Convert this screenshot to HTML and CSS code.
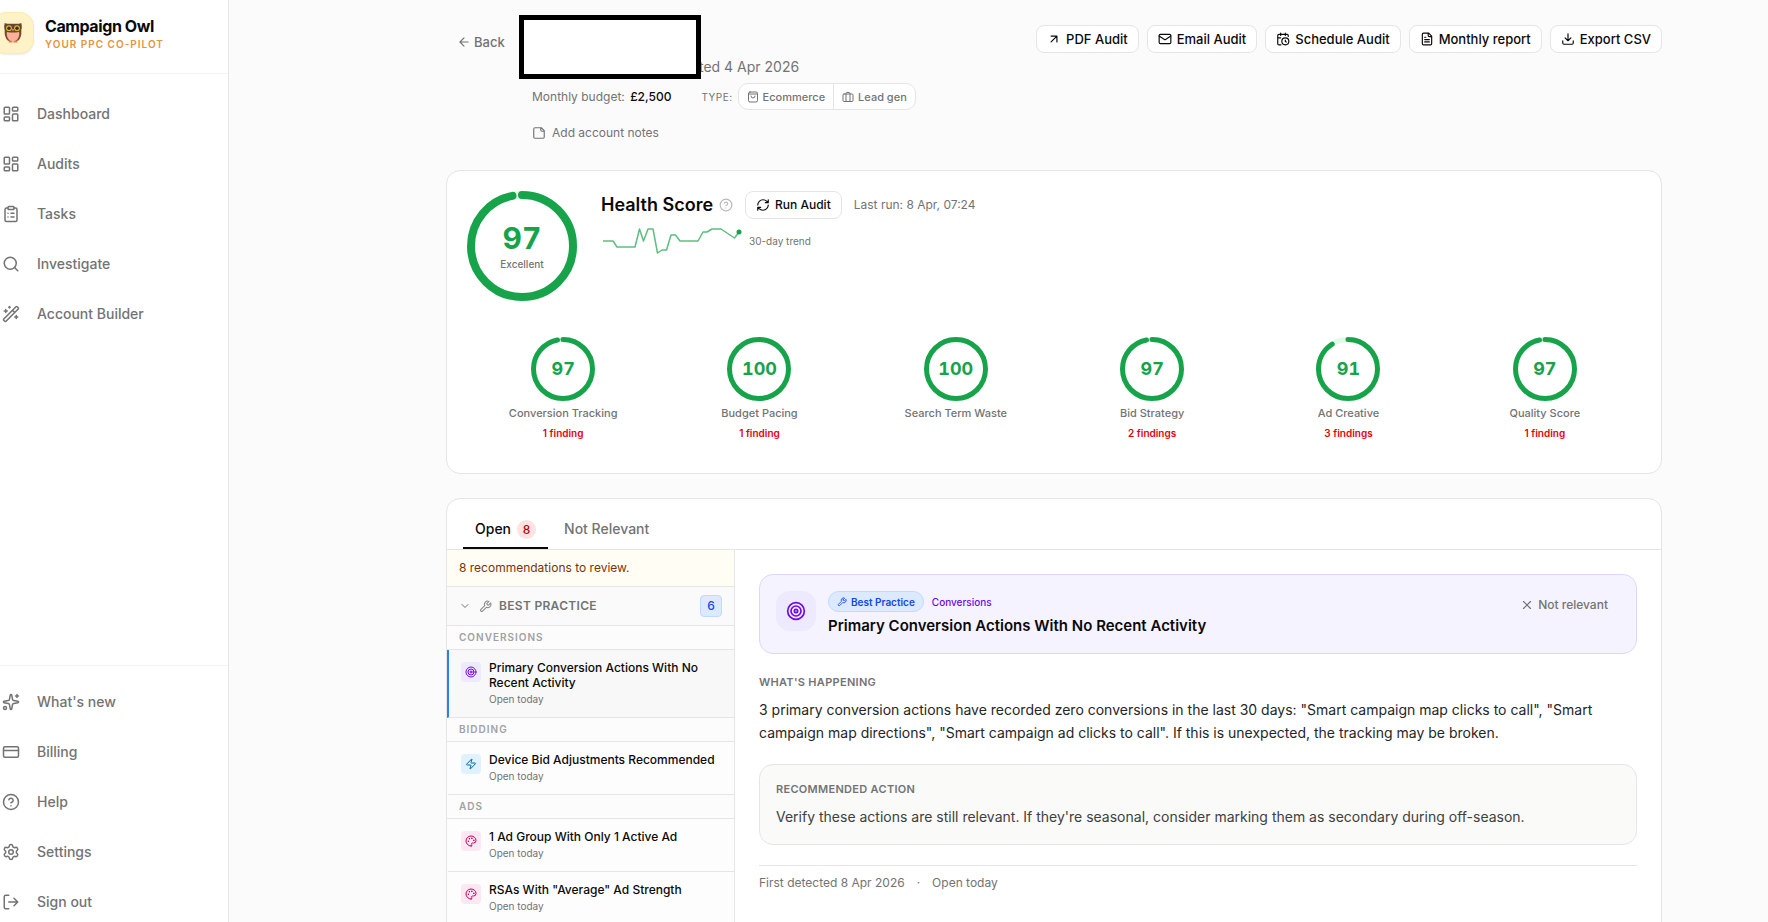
FILE: index.html
```html
<!DOCTYPE html>
<html lang="en">
<head>
<meta charset="utf-8">
<meta name="viewport" content="width=device-width, initial-scale=1">
<title>Campaign Owl</title>
<link rel="stylesheet" href="styles.css">
</head>
<body>
<svg class="sprite" aria-hidden="true">
  <symbol id="i-dashboard" viewBox="0 0 24 24"><rect width="7" height="9" x="3" y="3" rx="1"/><rect width="7" height="5" x="14" y="3" rx="1"/><rect width="7" height="9" x="14" y="12" rx="1"/><rect width="7" height="5" x="3" y="16" rx="1"/></symbol>
  <symbol id="i-tasks" viewBox="0 0 24 24"><rect width="8" height="4" x="8" y="2" rx="1"/><path d="M16 4h2a2 2 0 0 1 2 2v14a2 2 0 0 1-2 2H6a2 2 0 0 1-2-2V6a2 2 0 0 1 2-2h2M12 11h4M12 16h4M8 11h.01M8 16h.01"/></symbol>
  <symbol id="i-search" viewBox="0 0 24 24"><circle cx="11" cy="11" r="8"/><path d="m21 21-4.3-4.3"/></symbol>
  <symbol id="i-wand" viewBox="0 0 24 24"><path d="m21.64 3.64-1.28-1.28a1.21 1.21 0 0 0-1.72 0L2.36 18.64a1.21 1.21 0 0 0 0 1.72l1.28 1.28a1.2 1.2 0 0 0 1.72 0L21.64 5.36a1.2 1.2 0 0 0 0-1.72M14 7l3 3M5 6v4M19 14v4M10 2v2M7 8H3M21 16h-4M11 3H9"/></symbol>
  <symbol id="i-sparkles" viewBox="0 0 24 24"><path d="M11.017 2.814a1 1 0 0 1 1.966 0l1.051 5.558a2 2 0 0 0 1.594 1.594l5.558 1.051a1 1 0 0 1 0 1.966l-5.558 1.051a2 2 0 0 0-1.594 1.594l-1.051 5.558a1 1 0 0 1-1.966 0l-1.051-5.558a2 2 0 0 0-1.594-1.594l-5.558-1.051a1 1 0 0 1 0-1.966l5.558-1.051a2 2 0 0 0 1.594-1.594zM20 2v4M22 4h-4"/><circle cx="4" cy="20" r="2"/></symbol>
  <symbol id="i-card" viewBox="0 0 24 24"><rect width="20" height="14" x="2" y="5" rx="2"/><path d="M2 10h20"/></symbol>
  <symbol id="i-help" viewBox="0 0 24 24"><circle cx="12" cy="12" r="10"/><path d="M9.09 9a3 3 0 0 1 5.83 1c0 2-3 3-3 3M12 17h.01"/></symbol>
  <symbol id="i-settings" viewBox="0 0 24 24"><path d="M9.671 4.136a2.34 2.34 0 0 1 4.659 0 2.34 2.34 0 0 0 3.319 1.915 2.34 2.34 0 0 1 2.33 4.033 2.34 2.34 0 0 0 0 3.831 2.34 2.34 0 0 1-2.33 4.033 2.34 2.34 0 0 0-3.319 1.915 2.34 2.34 0 0 1-4.659 0 2.34 2.34 0 0 0-3.32-1.915 2.34 2.34 0 0 1-2.33-4.033 2.34 2.34 0 0 0 0-3.831A2.34 2.34 0 0 1 6.35 6.051a2.34 2.34 0 0 0 3.319-1.915"/><circle cx="12" cy="12" r="3"/></symbol>
  <symbol id="i-logout" viewBox="0 0 24 24"><path d="m16 17 5-5-5-5M21 12H9M9 21H5a2 2 0 0 1-2-2V5a2 2 0 0 1 2-2h4"/></symbol>
  <symbol id="i-back" viewBox="0 0 24 24"><path d="m12 19-7-7 7-7M19 12H5"/></symbol>
  <symbol id="i-bag" viewBox="0 0 24 24"><rect x="3" y="2" width="18" height="20" rx="3"/><path d="M3 6h18M16 10a4 4 0 0 1-8 0"/></symbol>
  <symbol id="i-case" viewBox="0 0 24 24"><rect x="2" y="6" width="20" height="15" rx="2"/><path d="M8 21V5a2 2 0 0 1 2-2h4a2 2 0 0 1 2 2v16"/></symbol>
  <symbol id="i-note" viewBox="0 0 24 24"><path d="M16 3H5a2 2 0 0 0-2 2v14a2 2 0 0 0 2 2h14a2 2 0 0 0 2-2V8zM15 3v4a2 2 0 0 0 2 2h4"/></symbol>
  <symbol id="i-upright" viewBox="0 0 24 24"><path d="M7 7h10v10M7 17 17 7"/></symbol>
  <symbol id="i-mail" viewBox="0 0 24 24"><rect width="20" height="16" x="2" y="4" rx="2"/><path d="m22 7-8.97 5.7a1.94 1.94 0 0 1-2.06 0L2 7"/></symbol>
  <symbol id="i-calclock" viewBox="0 0 24 24"><path d="M16 14v2.2l1.6 1M16 2v4M21 7.5V6a2 2 0 0 0-2-2H5a2 2 0 0 0-2 2v14a2 2 0 0 0 2 2h3.5M3 10h5M8 2v4"/><circle cx="16" cy="16" r="6"/></symbol>
  <symbol id="i-file" viewBox="0 0 24 24"><path d="M15 2H6a2 2 0 0 0-2 2v16a2 2 0 0 0 2 2h12a2 2 0 0 0 2-2V7zM14 2v4a2 2 0 0 0 2 2h4M10 9H8M16 13H8M16 17H8"/></symbol>
  <symbol id="i-download" viewBox="0 0 24 24"><path d="M12 15V3M21 15v4a2 2 0 0 1-2 2H5a2 2 0 0 1-2-2v-4M7 10l5 5 5-5"/></symbol>
  <symbol id="i-refresh" viewBox="0 0 24 24"><path d="M3 12a9 9 0 0 1 9-9 9.75 9.75 0 0 1 6.74 2.74L21 8M21 3v5h-5M21 12a9 9 0 0 1-9 9 9.75 9.75 0 0 1-6.74-2.74L3 16M8 16H3v5"/></symbol>
  <symbol id="i-chevron" viewBox="0 0 24 24"><path d="m6 9 6 6 6-6"/></symbol>
  <symbol id="i-wrench" viewBox="0 0 24 24"><path d="M14.7 6.3a1 1 0 0 0 0 1.4l1.6 1.6a1 1 0 0 0 1.4 0l3.77-3.77a6 6 0 0 1-7.94 7.94l-6.91 6.91a2.12 2.12 0 0 1-3-3l6.91-6.91a6 6 0 0 1 7.94-7.94l-3.76 3.76z"/></symbol>
  <symbol id="i-target" viewBox="0 0 24 24"><circle cx="12" cy="12" r="10"/><circle cx="12" cy="12" r="6"/><circle cx="12" cy="12" r="2"/></symbol>
  <symbol id="i-zap" viewBox="0 0 24 24"><path d="M4 14a1 1 0 0 1-.78-1.63l9.9-10.2a.5.5 0 0 1 .86.46l-1.92 6.02A1 1 0 0 0 13 10h7a1 1 0 0 1 .78 1.63l-9.9 10.2a.5.5 0 0 1-.86-.46l1.92-6.02A1 1 0 0 0 11 14z"/></symbol>
  <symbol id="i-palette" viewBox="0 0 24 24"><path d="M12 22a1 1 0 0 1 0-20 10 9 0 0 1 10 9 5 5 0 0 1-5 5h-2.25a1.75 1.75 0 0 0-1.4 2.8l.3.4a1.75 1.75 0 0 1-1.4 2.8z"/><g fill="currentColor"><circle cx="13.5" cy="6.5" r=".5"/><circle cx="17.5" cy="10.5" r=".5"/><circle cx="6.5" cy="12.5" r=".5"/><circle cx="8.5" cy="7.5" r=".5"/></g></symbol>
  <symbol id="i-x" viewBox="0 0 24 24"><path d="M18 6 6 18M6 6l12 12"/></symbol>
</svg>

<div class="app">
  <aside class="sidebar">
    <div class="brand">
      <span class="brand-tile">
        <svg class="owl" viewBox="0 0 20 22" aria-hidden="true">
          <path d="M6 18.500h3.500v2H5.500zM10.500 18.500H14l.5 2h-4z" fill="#f4743b"/>
          <path d="M2 7C1 11 2 16.500 5 18.800h10c3-2.300 4-7.800 3-11.800z" fill="#7b4a35"/>
          <path d="M3.800 10.500C3.500 15 5.500 19.200 10 19.200s6.500-4.200 6.200-8.700C14 8.500 6 8.500 3.800 10.500z" fill="#fbb09a"/>
          <path d="M1.700 1c2.500 1 5 .8 8.300.8S15.800 2 18.300 1c.5 2.500.7 4 .2 6.200-.6 2.600-4 3.300-8.500 3.300S2.100 9.800 1.500 7.200C1 5 1.200 3.500 1.700 1z" fill="#6b4334"/>
          <circle cx="6" cy="6.200" r="2.900" fill="#d9b52c"/><circle cx="14" cy="6.200" r="2.900" fill="#d9b52c"/>
          <circle cx="6" cy="6.200" r="1.700" fill="#33302b"/><circle cx="14" cy="6.200" r="1.700" fill="#33302b"/>
          <path d="M9 7h2l-1 2.600z" fill="#f0a13a"/>
        </svg>
      </span>
      <span class="brand-text">
        <strong class="brand-name">Campaign Owl</strong>
        <span class="brand-tag">YOUR PPC CO-PILOT</span>
      </span>
    </div>
    <nav class="nav" aria-label="Main">
      <a class="nav-item" href="#"><svg class="icon"><use href="#i-dashboard"/></svg>Dashboard</a>
      <a class="nav-item" href="#"><svg class="icon"><use href="#i-dashboard"/></svg>Audits</a>
      <a class="nav-item" href="#"><svg class="icon"><use href="#i-tasks"/></svg>Tasks</a>
      <a class="nav-item" href="#"><svg class="icon"><use href="#i-search"/></svg>Investigate</a>
      <a class="nav-item" href="#"><svg class="icon"><use href="#i-wand"/></svg>Account Builder</a>
    </nav>
    <nav class="nav nav-foot" aria-label="Account">
      <a class="nav-item" href="#"><svg class="icon"><use href="#i-sparkles"/></svg>What's new</a>
      <a class="nav-item" href="#"><svg class="icon"><use href="#i-card"/></svg>Billing</a>
      <a class="nav-item" href="#"><svg class="icon"><use href="#i-help"/></svg>Help</a>
      <a class="nav-item" href="#"><svg class="icon"><use href="#i-settings"/></svg>Settings</a>
      <a class="nav-item" href="#"><svg class="icon"><use href="#i-logout"/></svg>Sign out</a>
    </nav>
  </aside>

  <main class="main">
    <header class="page-head">
      <a class="back" href="#"><svg class="icon"><use href="#i-back"/></svg>Back</a>
      <div class="account">
        <div class="account-title">
          <div class="redacted"></div>
          <span class="created">ted 4 Apr 2026</span>
        </div>
        <div class="account-meta">
          <span class="budget">Monthly budget: <strong>£2,500</strong></span>
          <span class="type-label" id="type-label">TYPE:</span>
          <div class="segment" role="group" aria-labelledby="type-label">
            <button class="segment-btn" type="button"><svg class="icon"><use href="#i-bag"/></svg>Ecommerce</button>
            <button class="segment-btn" type="button"><svg class="icon"><use href="#i-case"/></svg>Lead gen</button>
          </div>
        </div>
        <button class="add-notes" type="button"><svg class="icon"><use href="#i-note"/></svg>Add account notes</button>
      </div>
      <div class="actions">
        <button class="btn" type="button"><svg class="icon"><use href="#i-upright"/></svg>PDF Audit</button>
        <button class="btn" type="button"><svg class="icon"><use href="#i-mail"/></svg>Email Audit</button>
        <button class="btn" type="button"><svg class="icon"><use href="#i-calclock"/></svg>Schedule Audit</button>
        <button class="btn" type="button"><svg class="icon"><use href="#i-file"/></svg>Monthly report</button>
        <button class="btn" type="button"><svg class="icon"><use href="#i-download"/></svg>Export CSV</button>
      </div>
    </header>

    <section class="card health">
      <div class="health-top">
        <div class="ring ring-lg">
          <svg viewBox="0 0 110 110" aria-hidden="true"><circle class="track" cx="55" cy="55" r="51"/><circle class="arc" cx="55" cy="55" r="51" pathLength="100" stroke-dasharray="97 100"/></svg>
          <div class="ring-label"><span class="score">97</span><span class="grade">Excellent</span></div>
        </div>
        <div class="health-info">
          <div class="health-row">
            <h2 class="health-title">Health Score</h2>
            <svg class="icon hint"><use href="#i-help"/></svg>
            <button class="btn run" type="button"><svg class="icon"><use href="#i-refresh"/></svg>Run Audit</button>
            <span class="last-run">Last run: 8 Apr, 07:24</span>
          </div>
          <div class="trend">
            <svg class="spark" viewBox="0 0 144 32" aria-hidden="true"><polyline points="2,16 12,16 16,22 34,22 38.500,4 42.500,16 47,4 52,4 56.500,28 61,25 65.500,25 70,10 74.500,10 79,16 97,16 102,7 106,7 111,4 120,4 133.500,13 138,7"/><circle cx="138" cy="7" r="2.500"/></svg>
            <span>30-day trend</span>
          </div>
        </div>
      </div>
      <div class="scores">
        <div class="score-cell"><div class="ring"><svg viewBox="0 0 64 64" aria-hidden="true"><circle class="track" cx="32" cy="32" r="29.500"/><circle class="arc" cx="32" cy="32" r="29.500" pathLength="100" stroke-dasharray="97 100"/></svg><span class="ring-label">97</span></div><span class="score-name">Conversion Tracking</span><span class="findings">1 finding</span></div>
        <div class="score-cell"><div class="ring"><svg viewBox="0 0 64 64" aria-hidden="true"><circle class="arc" cx="32" cy="32" r="29.500"/></svg><span class="ring-label">100</span></div><span class="score-name">Budget Pacing</span><span class="findings">1 finding</span></div>
        <div class="score-cell"><div class="ring"><svg viewBox="0 0 64 64" aria-hidden="true"><circle class="arc" cx="32" cy="32" r="29.500"/></svg><span class="ring-label">100</span></div><span class="score-name">Search Term Waste</span></div>
        <div class="score-cell"><div class="ring"><svg viewBox="0 0 64 64" aria-hidden="true"><circle class="track" cx="32" cy="32" r="29.500"/><circle class="arc" cx="32" cy="32" r="29.500" pathLength="100" stroke-dasharray="97 100"/></svg><span class="ring-label">97</span></div><span class="score-name">Bid Strategy</span><span class="findings">2 findings</span></div>
        <div class="score-cell"><div class="ring"><svg viewBox="0 0 64 64" aria-hidden="true"><circle class="track" cx="32" cy="32" r="29.500"/><circle class="arc" cx="32" cy="32" r="29.500" pathLength="100" stroke-dasharray="91 100"/></svg><span class="ring-label">91</span></div><span class="score-name">Ad Creative</span><span class="findings">3 findings</span></div>
        <div class="score-cell"><div class="ring"><svg viewBox="0 0 64 64" aria-hidden="true"><circle class="track" cx="32" cy="32" r="29.500"/><circle class="arc" cx="32" cy="32" r="29.500" pathLength="100" stroke-dasharray="97 100"/></svg><span class="ring-label">97</span></div><span class="score-name">Quality Score</span><span class="findings">1 finding</span></div>
      </div>
    </section>

    <section class="card review">
      <div class="tabs" role="tablist">
        <button class="tab is-active" type="button" role="tab" aria-selected="true">Open <span class="tab-count">8</span></button>
        <button class="tab" type="button" role="tab" aria-selected="false">Not Relevant</button>
      </div>
      <div class="split">
        <div class="list">
          <p class="list-note">8 recommendations to review.</p>
          <button class="group" type="button" aria-expanded="true"><svg class="icon chev"><use href="#i-chevron"/></svg><svg class="icon wrench"><use href="#i-wrench"/></svg><span class="group-name">BEST PRACTICE</span><span class="group-count">6</span></button>
          <h3 class="list-head">CONVERSIONS</h3>
          <a class="item is-selected" href="#"><span class="tile violet"><svg class="icon"><use href="#i-target"/></svg></span><span class="item-text"><span class="item-title">Primary Conversion Actions With No Recent Activity</span><span class="item-sub">Open today</span></span></a>
          <h3 class="list-head">BIDDING</h3>
          <a class="item" href="#"><span class="tile sky"><svg class="icon"><use href="#i-zap"/></svg></span><span class="item-text"><span class="item-title">Device Bid Adjustments Recommended</span><span class="item-sub">Open today</span></span></a>
          <h3 class="list-head">ADS</h3>
          <a class="item" href="#"><span class="tile pink"><svg class="icon"><use href="#i-palette"/></svg></span><span class="item-text"><span class="item-title">1 Ad Group With Only 1 Active Ad</span><span class="item-sub">Open today</span></span></a>
          <a class="item" href="#"><span class="tile pink"><svg class="icon"><use href="#i-palette"/></svg></span><span class="item-text"><span class="item-title">RSAs With "Average" Ad Strength</span><span class="item-sub">Open today</span></span></a>
        </div>
        <article class="detail">
          <header class="banner">
            <span class="banner-tile"><svg class="icon"><use href="#i-target"/></svg></span>
            <div class="banner-text">
              <div class="banner-tags"><span class="pill"><svg class="icon"><use href="#i-wrench"/></svg>Best Practice</span><span class="category">Conversions</span></div>
              <h2 class="banner-title">Primary Conversion Actions With No Recent Activity</h2>
            </div>
            <button class="dismiss" type="button"><svg class="icon"><use href="#i-x"/></svg>Not relevant</button>
          </header>
          <h3 class="label">WHAT'S HAPPENING</h3>
          <p class="copy">3 primary conversion actions have recorded zero conversions in the last 30 days: "Smart campaign map clicks to call", "Smart campaign map directions", "Smart campaign ad clicks to call". If this is unexpected, the tracking may be broken.</p>
          <div class="recommend">
            <h3 class="label">RECOMMENDED ACTION</h3>
            <p class="copy">Verify these actions are still relevant. If they're seasonal, consider marking them as secondary during off-season.</p>
          </div>
          <footer class="detail-foot"><span>First detected 8 Apr 2026</span><span>·</span><span>Open today</span></footer>
        </article>
      </div>
    </section>
  </main>
</div>
</body>
</html>
```

FILE: styles.css
```css
* { box-sizing: border-box; }

body {
  margin: 0;
  background: #fbfbfb;
  color: #0a0a0a;
  font-family: Inter, "Liberation Sans", sans-serif;
  font-size: 14px;
  line-height: 20px;
}

h2, h3, p { margin: 0; }
a { color: inherit; text-decoration: none; }

button {
  margin: 0;
  padding: 0;
  border: 0;
  background: none;
  color: inherit;
  font: inherit;
  text-align: left;
}

.sprite { position: absolute; width: 0; height: 0; }

.icon {
  flex: none;
  width: 14px;
  height: 14px;
  fill: none;
  stroke: currentColor;
  stroke-width: 2;
  stroke-linecap: round;
  stroke-linejoin: round;
}

.app { display: flex; height: 100vh; overflow: hidden; }

/* Sidebar */
.sidebar {
  display: flex;
  flex: none;
  flex-direction: column;
  width: 229px;
  border-right: 1px solid #e5e5e5;
  background: #fff;
  overflow: hidden;
}

.brand {
  display: flex;
  align-items: center;
  gap: 11px;
  height: 74px;
  padding-bottom: 8px;
  border-bottom: 1px solid #f3f3f3;
}

.brand-tile {
  display: flex;
  align-items: center;
  justify-content: center;
  flex: none;
  width: 42px;
  height: 42px;
  margin-left: -8px;
  border: 1px solid #fdeab0;
  border-radius: 14px;
  background: #fef3c6;
  box-shadow: 0 1px 2px rgba(0, 0, 0, .08);
}

.owl { width: 20px; height: 22px; }
.brand-text { display: flex; flex-direction: column; padding-top: 2px; }
.brand-name { font-size: 16px; font-weight: 700; line-height: 20px; letter-spacing: -.4px; }
.brand-tag { color: #e8923c; font-size: 10px; font-weight: 600; line-height: 16px; letter-spacing: 1px; }

.nav { display: flex; flex-direction: column; gap: 10px; padding-top: 20px; }
.nav-foot { margin-top: auto; padding-top: 16px; border-top: 1px solid #f3f3f3; }

.nav-item {
  display: flex;
  align-items: center;
  gap: 17px;
  height: 40px;
  padding-left: 2px;
  color: #737373;
  font-weight: 500;
}
.nav-item .icon { width: 18px; height: 18px; }

/* Page */
.main {
  flex: 1;
  min-width: 0;
  padding: 15px 106px 24px 217px;
  overflow: hidden;
}

.page-head { display: flex; align-items: flex-start; height: 155px; }

.back {
  display: flex;
  align-items: center;
  gap: 3px;
  width: 73px;
  padding: 17px 0 0 11px;
  color: #737373;
  font-size: 13px;
  font-weight: 500;
}

.account { flex: 1; min-width: 0; }
.account-title { display: flex; align-items: flex-end; height: 64px; }
.redacted { position: relative; width: 182px; height: 64px; margin-right: -2px; border: 5px solid #000; background: #fff; }
.created { padding-bottom: 2px; color: #737373; }

.account-meta {
  display: flex;
  align-items: center;
  height: 27px;
  margin-top: 4px;
  padding-left: 13px;
  color: #737373;
  font-size: 12px;
}
.budget strong { margin-left: 2px; color: #0a0a0a; font-weight: 500; }
.type-label { margin: 0 5px 0 30px; font-size: 10px; letter-spacing: .5px; }

.segment { display: flex; border: 1px solid #e5e5e5; border-radius: 10px; background: #fff; overflow: hidden; }
.segment-btn {
  display: flex;
  align-items: center;
  gap: 4px;
  height: 25px;
  padding: 0 8px;
  font-size: 11px;
  font-weight: 500;
}
.segment-btn + .segment-btn { border-left: 1px solid #e5e5e5; }
.segment-btn .icon { width: 12px; height: 12px; }

.add-notes {
  display: flex;
  align-items: center;
  gap: 6px;
  margin-top: 13px;
  padding-left: 13px;
  color: #737373;
  font-size: 12px;
}

.actions { display: flex; gap: 8px; padding-top: 10px; }

.btn {
  display: flex;
  align-items: center;
  gap: 5px;
  height: 28px;
  padding: 0 10px;
  border: 1px solid #e5e5e5;
  border-radius: 8px;
  background: #fff;
  font-size: 13px;
  font-weight: 500;
  white-space: nowrap;
}

.card { border: 1px solid #e5e5e5; border-radius: 14px; background: #fff; overflow: hidden; }

/* Health score */
.health { height: 304px; padding: 20px; }
.health-top { display: flex; gap: 24px; }

.ring { display: grid; width: 64px; height: 64px; }
.ring-lg { width: 110px; height: 110px; }
.ring > * { grid-area: 1 / 1; }
.ring svg { width: 100%; height: 100%; fill: none; stroke-width: 5; transform: rotate(-90deg); }
.ring-lg svg { stroke-width: 8; }
.track { stroke: #dcfce7; }
.arc { stroke: #16a34a; stroke-linecap: round; }
.ring-label {
  display: flex;
  flex-direction: column;
  align-items: center;
  justify-content: center;
  color: #16a34a;
  font-size: 18px;
  font-weight: 700;
  font-variant-numeric: tabular-nums;
}
.ring-lg .ring-label { padding-top: 4px; }
.score { font-size: 30px; line-height: 32px; }
.grade { color: #737373; font-size: 10px; font-weight: 500; line-height: 20px; }

.health-row { display: flex; align-items: center; height: 28px; }
.health-title { font-size: 18px; font-weight: 600; line-height: 28px; }
.hint { margin: 0 12px 0 6px; color: #b8b8b8; }
.run { font-size: 12px; }
.last-run { margin-left: 12px; color: #737373; font-size: 12px; }

.trend { display: flex; align-items: center; gap: 4px; margin-top: 6px; color: #737373; font-size: 10px; }
.spark { width: 144px; height: 32px; }
.spark polyline { fill: none; stroke: #16a34a; stroke-width: 1.5; stroke-linejoin: round; opacity: .7; }
.spark circle { fill: #16a34a; }

.scores { display: grid; grid-template-columns: repeat(6, 1fr); gap: 4px; margin-top: 36px; }
.score-cell { display: flex; flex-direction: column; align-items: center; }
.score-name { margin-top: 4px; color: #737373; font-size: 11px; font-weight: 500; line-height: 16px; }
.findings { margin-top: 4px; color: #e7000b; font-size: 10px; font-weight: 600; line-height: 16px; }

/* Review */
.review { margin-top: 24px; }
.tabs { display: flex; gap: 4px; height: 51px; padding: 10px 16px 0; border-bottom: 1px solid #e5e5e5; }
.tab {
  display: flex;
  align-items: center;
  gap: 6px;
  padding: 2px 12px 0;
  border-bottom: 2px solid transparent;
  color: #737373;
  font-weight: 500;
}
.tab.is-active { border-color: #0a0a0a; color: #0a0a0a; }
.tab-count {
  width: 19px;
  height: 19px;
  border-radius: 10px;
  background: #ffe2e2;
  color: #c10007;
  font-size: 12px;
  font-weight: 500;
  line-height: 19px;
  text-align: center;
}

.split { display: flex; }
.list { flex: none; width: 288px; padding-bottom: 48px; border-right: 1px solid #e5e5e5; background: #fdfdfd; }

.list-note {
  padding: 8px 12px;
  border-bottom: 1px solid #e5e5e5;
  background: #fffdf4;
  color: #7b3306;
  font-size: 12px;
}

.group {
  display: flex;
  align-items: center;
  width: 100%;
  height: 39px;
  padding: 0 12px;
  border-bottom: 1px solid #e5e5e5;
  background: #fafafa;
  color: #737373;
}
.group .chev { width: 12px; height: 12px; margin-right: 8px; }
.group .wrench { width: 13px; height: 13px; color: #8c8c8c; }
.group-name { flex: 1; margin-left: 7px; font-size: 12px; font-weight: 600; letter-spacing: .3px; }
.group-count {
  width: 22px;
  border: 1px solid #bedbff;
  border-radius: 4px;
  background: #dbeafe;
  color: #1447e6;
  font-size: 12px;
  font-weight: 500;
  text-align: center;
}

.list-head {
  padding: 4px 12px;
  border-bottom: 1px solid #e5e5e5;
  background: #fcfcfc;
  color: #a1a1a1;
  font-size: 10px;
  font-weight: 600;
  line-height: 15px;
  letter-spacing: 1px;
}

.item {
  display: flex;
  gap: 8px;
  padding: 10px 12px;
  border-bottom: 1px solid #e5e5e5;
  border-left: 2px solid transparent;
}
.item.is-selected { border-left-color: #2b7fff; background: #f8f8f8; }
.item-text { display: flex; flex-direction: column; gap: 2px; }
.item-title { font-size: 12px; font-weight: 500; line-height: 15px; }
.item-sub { color: #737373; font-size: 10px; line-height: 15px; }

.tile {
  display: flex;
  align-items: center;
  justify-content: center;
  flex: none;
  width: 20px;
  height: 20px;
  margin-top: 2px;
  border-radius: 4px;
}
.tile .icon { width: 12px; height: 12px; }
.violet { background: #ede9fe; color: #7008e7; }
.sky { background: #dff2fe; color: #0069a8; }
.pink { background: #fce7f3; color: #c6005c; }

.detail { flex: 1; min-width: 0; padding: 24px; }

.banner {
  display: flex;
  align-items: flex-start;
  gap: 12px;
  padding: 16px;
  border: 1px solid #ddd6ff;
  border-radius: 14px;
  background: #f5f3ff;
}
.banner-tile {
  display: flex;
  align-items: center;
  justify-content: center;
  width: 40px;
  height: 40px;
  border-radius: 14px;
  background: #ede9fe;
  color: #7008e7;
}
.banner-tile .icon { width: 20px; height: 20px; }
.banner-text { flex: 1; }
.banner-tags { display: flex; align-items: center; gap: 8px; }
.pill {
  display: flex;
  align-items: center;
  gap: 4px;
  height: 21px;
  padding: 0 8px;
  border: 1px solid #bedbff;
  border-radius: 11px;
  background: #dbeafe;
  color: #1447e6;
  font-size: 10px;
  font-weight: 600;
}
.pill .icon { width: 10px; height: 10px; }
.category { color: #7008e7; font-size: 10px; font-weight: 500; }
.banner-title { margin-top: 3px; font-size: 15px; font-weight: 600; line-height: 22px; }
.dismiss {
  display: flex;
  align-items: center;
  gap: 4px;
  height: 28px;
  padding: 0 12px;
  color: #737373;
  font-size: 12px;
  font-weight: 500;
}

.label { color: #737373; font-size: 11px; font-weight: 600; line-height: 16px; letter-spacing: .3px; }
.banner + .label { margin-top: 20px; }
.copy { margin-top: 8px; color: #262626; font-size: 14px; line-height: 23px; }

.recommend {
  margin-top: 20px;
  padding: 16px;
  border: 1px solid #e5e5e5;
  border-radius: 14px;
  background: #fafaf9;
}
.recommend .copy { color: #404040; }

.detail-foot {
  display: flex;
  gap: 12px;
  margin-top: 20px;
  padding-top: 7px;
  border-top: 1px solid #e5e5e5;
  color: #737373;
  font-size: 12px;
}
```
